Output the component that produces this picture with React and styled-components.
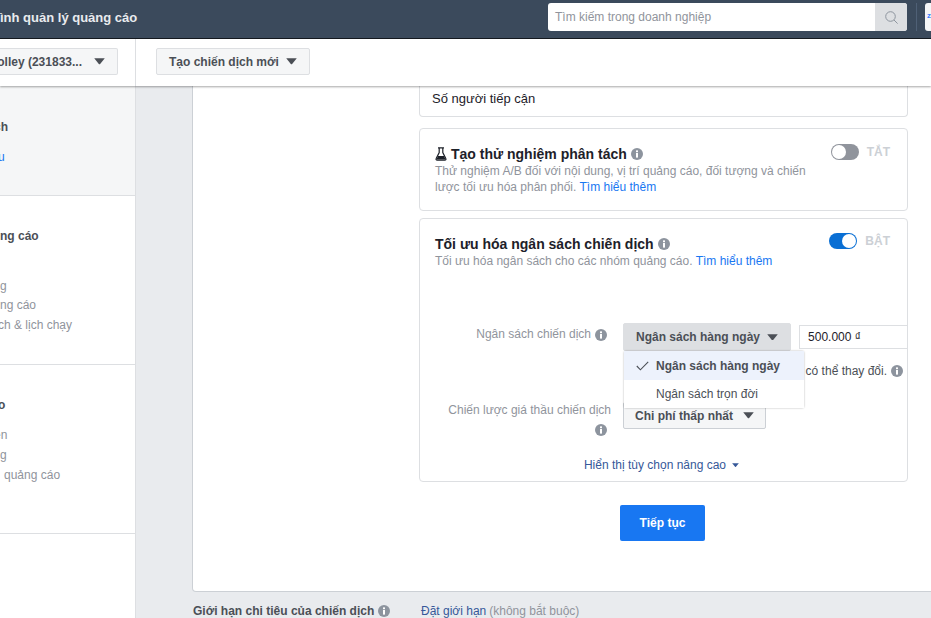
import React from "react";
import styled, { createGlobalStyle } from "styled-components";

const Global = createGlobalStyle`
  html, body { margin: 0; padding: 0; background: #e9ebee; }
  body { font-family: "Liberation Sans", Arial, sans-serif; font-size: 12px; color: #1d2129; }
`;

const Caret = ({ size = 11, color = "#4b4f56" }) => (
  <svg width={size} height={size * 0.6} viewBox="0 0 10 6" style={{ flex: "none" }}>
    <path d="M0.2 0.3h9.6L5.6 5.4q-.6.6-1.2 0z" fill={color} />
  </svg>
);

const Info = ({ color = "#8d949e" }) => (
  <svg width="12" height="12" viewBox="0 0 12 12" style={{ flex: "none" }}>
    <circle cx="6" cy="6" r="6" fill={color} />
    <rect x="5" y="5" width="2" height="4.6" fill="#fff" />
    <rect x="5" y="2.4" width="2" height="1.8" fill="#fff" />
  </svg>
);

const Flask = () => (
  <svg width="12" height="14" viewBox="0 0 12 14" style={{ flex: "none" }}>
    <path d="M3 .8h6M4.2 1v4.6L1.2 11.6q-.6 1.6 1 1.6h7.6q1.6 0 1-1.6L7.8 5.6V1" fill="none" stroke="#1d2129" strokeWidth="1.2" />
    <path d="M3 9h6l1.6 3.6H1.4z" fill="#1d2129" />
  </svg>
);

export default function App() {
  return (
    <Page>
      <Global />
      <TopBar>
        <Title>ình quản lý quảng cáo</Title>
        <Search>
          <SearchText>Tìm kiếm trong doanh nghiệp</SearchText>
          <SearchButton>
            <svg width="13" height="13" viewBox="0 0 13 13" fill="none" stroke="#8d949e" strokeWidth="1">
              <circle cx="5.5" cy="5.5" r="4.8" />
              <path d="M9 9l3.6 3.6" />
            </svg>
          </SearchButton>
        </Search>
        <Divider />
        <AccountChip>z</AccountChip>
      </TopBar>

      <ToolBar>
        <ToolLeft>
          <ToolButton $clipped>
            olley (231833...
            <Caret />
          </ToolButton>
        </ToolLeft>
        <ToolRight>
          <ToolButton>
            Tạo chiến dịch mới
            <Caret />
          </ToolButton>
        </ToolRight>
      </ToolBar>

      <Body>
        <Sidebar>
          <SideSection $shaded $height={110}>
            <SideItem $top={34} $indent={-6} $strong>ch</SideItem>
            <SideItem $top={15} $indent={-2} $link>u</SideItem>
          </SideSection>
          <SideSection $height={169}>
            <SideItem $top={33} $strong>ng cáo</SideItem>
            <SideItem $top={35}>g</SideItem>
            <SideItem $top={4}>ng cáo</SideItem>
            <SideItem $top={5} $indent={-2}>ch &amp; lịch chạy</SideItem>
          </SideSection>
          <SideSection $height={169}>
            <SideItem $top={33} $indent={-2} $strong>o</SideItem>
            <SideItem $top={15} $indent={-6}>en</SideItem>
            <SideItem $top={5}>g</SideItem>
            <SideItem $top={5} $indent={4}>quảng cáo</SideItem>
          </SideSection>
        </Sidebar>

        <Main>
          <Panel>
            <Column>
              <ReachCard>Số người tiếp cận</ReachCard>

              <Card $height={83} $top={11}>
                <CardHead>
                  <div>
                    <CardTitle>
                      <Flask />
                      Tạo thử nghiệm phân tách
                      <Info />
                    </CardTitle>
                    <CardText>
                      Thử nghiệm A/B đối với nội dung, vị trí quảng cáo, đối tượng và chiến lược tối ưu hóa phân phối.{" "}
                      <LearnMore>Tìm hiểu thêm</LearnMore>
                    </CardText>
                  </div>
                  <ToggleWrap>
                    <Toggle />
                    <ToggleLabel>TẮT</ToggleLabel>
                  </ToggleWrap>
                </CardHead>
              </Card>

              <Card $height={264} $top={7}>
                <CardHead>
                  <div>
                    <CardTitle>
                      Tối ưu hóa ngân sách chiến dịch
                      <Info />
                    </CardTitle>
                    <CardText>
                      Tối ưu hóa ngân sách cho các nhóm quảng cáo. <LearnMore>Tìm hiểu thêm</LearnMore>
                    </CardText>
                  </div>
                  <ToggleWrap $on>
                    <Toggle $on />
                    <ToggleLabel>BẬT</ToggleLabel>
                  </ToggleWrap>
                </CardHead>

                <BudgetRow>
                  <FieldLabel $inline>
                    Ngân sách chiến dịch
                    <Info />
                  </FieldLabel>
                  <BudgetControls>
                    <SelectButton $open>
                      Ngân sách hàng ngày
                      <Caret />
                    </SelectButton>
                    <AmountInput>500.000 ₫</AmountInput>
                    <Menu>
                      <MenuItem $active>
                        <svg width="13" height="10" viewBox="0 0 13 10" fill="none" stroke="#4b4f56" strokeWidth="1.1">
                          <path d="M.8 5l3.6 3.8L12.2.8" />
                        </svg>
                        Ngân sách hàng ngày
                      </MenuItem>
                      <MenuItem>Ngân sách trọn đời</MenuItem>
                    </Menu>
                  </BudgetControls>
                </BudgetRow>

                <HintRow>
                  có thể thay đổi.
                  <Info />
                </HintRow>

                <BidRow>
                  <FieldLabel>
                    Chiến lược giá thầu chiến dịch
                    <Info />
                  </FieldLabel>
                  <SelectButton>
                    Chi phí thấp nhất
                    <Caret />
                  </SelectButton>
                </BidRow>

                <Advanced>
                  Hiển thị tùy chọn nâng cao
                  <Caret size={7} color="#365899" />
                </Advanced>
              </Card>

              <Actions>
                <PrimaryButton>Tiếp tục</PrimaryButton>
              </Actions>
            </Column>
          </Panel>

          <LimitRow>
            <LimitLabel>
              Giới hạn chi tiêu của chiến dịch
              <Info />
            </LimitLabel>
            <LimitLink>Đặt giới hạn</LimitLink>
            <LimitNote>(không bắt buộc)</LimitNote>
          </LimitRow>
        </Main>
      </Body>
    </Page>
  );
}

const Page = styled.div`
  width: 931px;
  height: 618px;
  overflow: hidden;
  display: flex;
  flex-direction: column;
`;

const TopBar = styled.div`
  flex: none;
  height: 38px;
  background: #3b4a5c;
  border-bottom: 1px solid #151a20;
  display: flex;
  align-items: flex-start;
`;

const Title = styled.div`
  flex: none;
  width: 548px;
  color: #e9ebee;
  font-size: 13px;
  font-weight: bold;
  line-height: 35px;
  white-space: nowrap;
`;

const Search = styled.div`
  flex: none;
  margin-top: 3px;
  width: 359px;
  height: 28px;
  background: #fff;
  border-radius: 3px;
  overflow: hidden;
  display: flex;
  align-items: center;
  justify-content: space-between;
`;

const SearchText = styled.span`
  margin-left: 7px;
  color: #90949c;
  font-size: 12px;
`;

const SearchButton = styled.div`
  width: 32px;
  height: 28px;
  background: #dddfe2;
  display: flex;
  align-items: center;
  justify-content: center;
`;

const Divider = styled.div`
  flex: none;
  width: 1px;
  height: 28px;
  margin: 3px 0 0 9px;
  background: #4f6076;
`;

const AccountChip = styled.div`
  flex: none;
  width: 20px;
  height: 28px;
  margin: 3px 0 0 8px;
  padding-left: 2px;
  background: #f5f6f7;
  border-radius: 3px;
  color: #4080ff;
  font-size: 8px;
  font-weight: bold;
  line-height: 26px;
`;

const ToolBar = styled.div`
  flex: none;
  height: 47px;
  background: #fff;
  box-shadow: 0 1px 2px rgba(0, 0, 0, 0.35);
  position: relative;
  z-index: 2;
  display: flex;
`;

const ToolLeft = styled.div`
  width: 136px;
  border-right: 1px solid #dddfe2;
  display: flex;
  justify-content: flex-end;
  padding: 9px 17px 0 0;
  box-sizing: border-box;
  overflow: hidden;
`;

const ToolRight = styled.div`
  padding: 9px 0 0 20px;
`;

const ToolButton = styled.div`
  height: 27px;
  box-sizing: border-box;
  flex: none;
  padding: 0 12px;
  display: flex;
  align-items: center;
  gap: ${(p) => (p.$clipped ? 12 : 7)}px;
  white-space: nowrap;
  background: #f5f6f7;
  border: 1px solid #dddfe2;
  border-left-width: ${(p) => (p.$clipped ? 0 : 1)}px;
  border-radius: 2px;
  color: #4b4f56;
  font-size: 12px;
  font-weight: bold;
`;

const Body = styled.div`
  flex: 1;
  min-height: 0;
  display: flex;
`;

const Sidebar = styled.div`
  flex: none;
  width: 136px;
  box-sizing: border-box;
  background: #fff;
  border-right: 1px solid #dddfe2;
`;

const SideSection = styled.div`
  display: flow-root;
  height: ${(p) => p.$height}px;
  box-sizing: border-box;
  background: ${(p) => (p.$shaded ? "#f5f6f7" : "#fff")};
  border-bottom: 1px solid #dddfe2;
`;

const SideItem = styled.div`
  margin-top: ${(p) => p.$top}px;
  margin-left: ${(p) => p.$indent || 0}px;
  font-size: 12px;
  line-height: 15px;
  white-space: nowrap;
  font-weight: ${(p) => (p.$strong ? "bold" : "normal")};
  color: ${(p) => (p.$link ? "#1877f2" : p.$strong ? "#4b4f56" : "#90949c")};
`;

const Main = styled.div`
  flex: 1;
  min-width: 0;
  background: #e9ebee;
  padding-left: 56px;
  overflow: hidden;
`;

const Panel = styled.div`
  height: 506px;
  width: 800px;
  box-sizing: border-box;
  background: #fff;
  border: 1px solid #ccd0d5;
  border-top: 0;
  border-radius: 0 0 0 4px;
  padding-left: 226px;
`;

const Column = styled.div`
  width: 489px;
`;

const ReachCard = styled.div`
  height: 31px;
  box-sizing: border-box;
  padding: 4px 0 0 12px;
  border: 1px solid #dddfe2;
  border-top: 0;
  border-radius: 0 0 4px 4px;
  font-size: 13px;
  line-height: 18px;
`;

const Card = styled.div`
  height: ${(p) => p.$height}px;
  box-sizing: border-box;
  margin-top: ${(p) => p.$top}px;
  padding: 16px 0 0 15px;
  border: 1px solid #dddfe2;
  border-radius: 4px;
`;

const CardHead = styled.div`
  display: flex;
  justify-content: space-between;
  align-items: flex-start;
`;

const CardTitle = styled.div`
  display: flex;
  align-items: center;
  gap: 4px;
  color: #1d2129;
  font-size: 14px;
  font-weight: bold;
  line-height: 18px;
`;

const CardText = styled.div`
  width: 372px;
  color: #90949c;
  font-size: 12px;
  line-height: 16px;
`;

const LearnMore = styled.span`
  color: #1877f2;
`;

const ToggleWrap = styled.div`
  display: flex;
  align-items: center;
  gap: 8px;
  margin: ${(p) => (p.$on ? -2 : -1)}px 17px 0 0;
  height: 16px;
`;

const Toggle = styled.div`
  width: 28px;
  height: 16px;
  box-sizing: border-box;
  border-radius: 8px;
  background: ${(p) => (p.$on ? "#0a6fd4" : "#90949c")};
  padding: 1px;
  display: flex;
  justify-content: ${(p) => (p.$on ? "flex-end" : "flex-start")};
  &::after {
    content: "";
    width: 14px;
    height: 14px;
    border-radius: 50%;
    background: #fff;
  }
`;

const ToggleLabel = styled.span`
  color: #ccd0d5;
  font-size: 12px;
  font-weight: bold;
`;

const BudgetRow = styled.div`
  display: flex;
  margin-top: 54px;
`;

const FieldLabel = styled.div`
  width: 176px;
  flex: none;
  box-sizing: border-box;
  display: flex;
  flex-wrap: wrap;
  justify-content: flex-end;
  align-items: center;
  align-content: flex-start;
  column-gap: 4px;
  row-gap: 6px;
  padding-top: ${(p) => (p.$inline ? 4 : 1)}px;
  color: #90949c;
  font-size: 12px;
  line-height: 15px;
  svg {
    margin-right: 4px;
  }
`;

const BudgetControls = styled.div`
  position: relative;
  margin-left: 12px;
  display: flex;
  align-items: center;
  gap: 8px;
`;

const SelectButton = styled.div`
  box-sizing: border-box;
  height: ${(p) => (p.$open ? 28 : 27)}px;
  padding: ${(p) => (p.$open ? "0 12px" : "0 11px")};
  display: flex;
  align-items: center;
  gap: ${(p) => (p.$open ? 7 : 10)}px;
  white-space: nowrap;
  background: ${(p) => (p.$open ? "#dddfe2" : "#f5f6f7")};
  border: 1px solid ${(p) => (p.$open ? "#dddfe2" : "#ccd0d5")};
  border-radius: 2px;
  color: #4b4f56;
  font-size: 12px;
  font-weight: bold;
`;

const AmountInput = styled.div`
  box-sizing: border-box;
  width: 108px;
  height: 24px;
  padding-left: 8px;
  border: 1px solid #dddfe2;
  border-right: 0;
  color: #1d2129;
  font-size: 12px;
  line-height: 22px;
`;

const Menu = styled.div`
  position: absolute;
  left: 1px;
  top: 28px;
  width: 180px;
  background: #fff;
  border-radius: 2px;
  box-shadow: 0 0 2px rgba(0, 0, 0, 0.35);
  z-index: 1;
`;

const MenuItem = styled.div`
  height: ${(p) => (p.$active ? 29 : 28)}px;
  padding-left: 32px;
  position: relative;
  display: flex;
  align-items: center;
  background: ${(p) => (p.$active ? "#edf2fc" : "#fff")};
  color: #4b4f56;
  font-size: 12px;
  font-weight: ${(p) => (p.$active ? "bold" : "normal")};
  svg {
    position: absolute;
    left: 12px;
    top: 10px;
  }
`;

const HintRow = styled.div`
  display: flex;
  justify-content: flex-end;
  align-items: center;
  gap: 4px;
  margin: 12px 4px 0 0;
  height: 16px;
  color: #4b4f56;
  font-size: 12px;
`;

const BidRow = styled.div`
  display: flex;
  align-items: flex-start;
  gap: 12px;
  margin-top: 23px;
`;

const Advanced = styled.div`
  display: flex;
  justify-content: center;
  align-items: center;
  gap: 6px;
  margin-top: 21px;
  padding-right: 19px;
  color: #365899;
  font-size: 12px;
  line-height: 16px;
`;

const Actions = styled.div`
  display: flex;
  justify-content: center;
  margin-top: 23px;
  padding-right: 2px;
`;

const PrimaryButton = styled.div`
  width: 85px;
  height: 36px;
  background: #1877f2;
  border-radius: 2px;
  color: #fff;
  font-size: 12px;
  font-weight: bold;
  line-height: 36px;
  text-align: center;
`;

const LimitRow = styled.div`
  display: flex;
  align-items: center;
  margin-top: 11px;
  line-height: 16px;
  font-size: 12px;
`;

const LimitLabel = styled.div`
  width: 229px;
  flex: none;
  display: flex;
  align-items: center;
  gap: 4px;
  padding-left: 1px;
  box-sizing: border-box;
  color: #4b4f56;
  font-weight: bold;
`;

const LimitLink = styled.span`
  color: #365899;
`;

const LimitNote = styled.span`
  color: #90949c;
  margin-left: 3px;
`;
